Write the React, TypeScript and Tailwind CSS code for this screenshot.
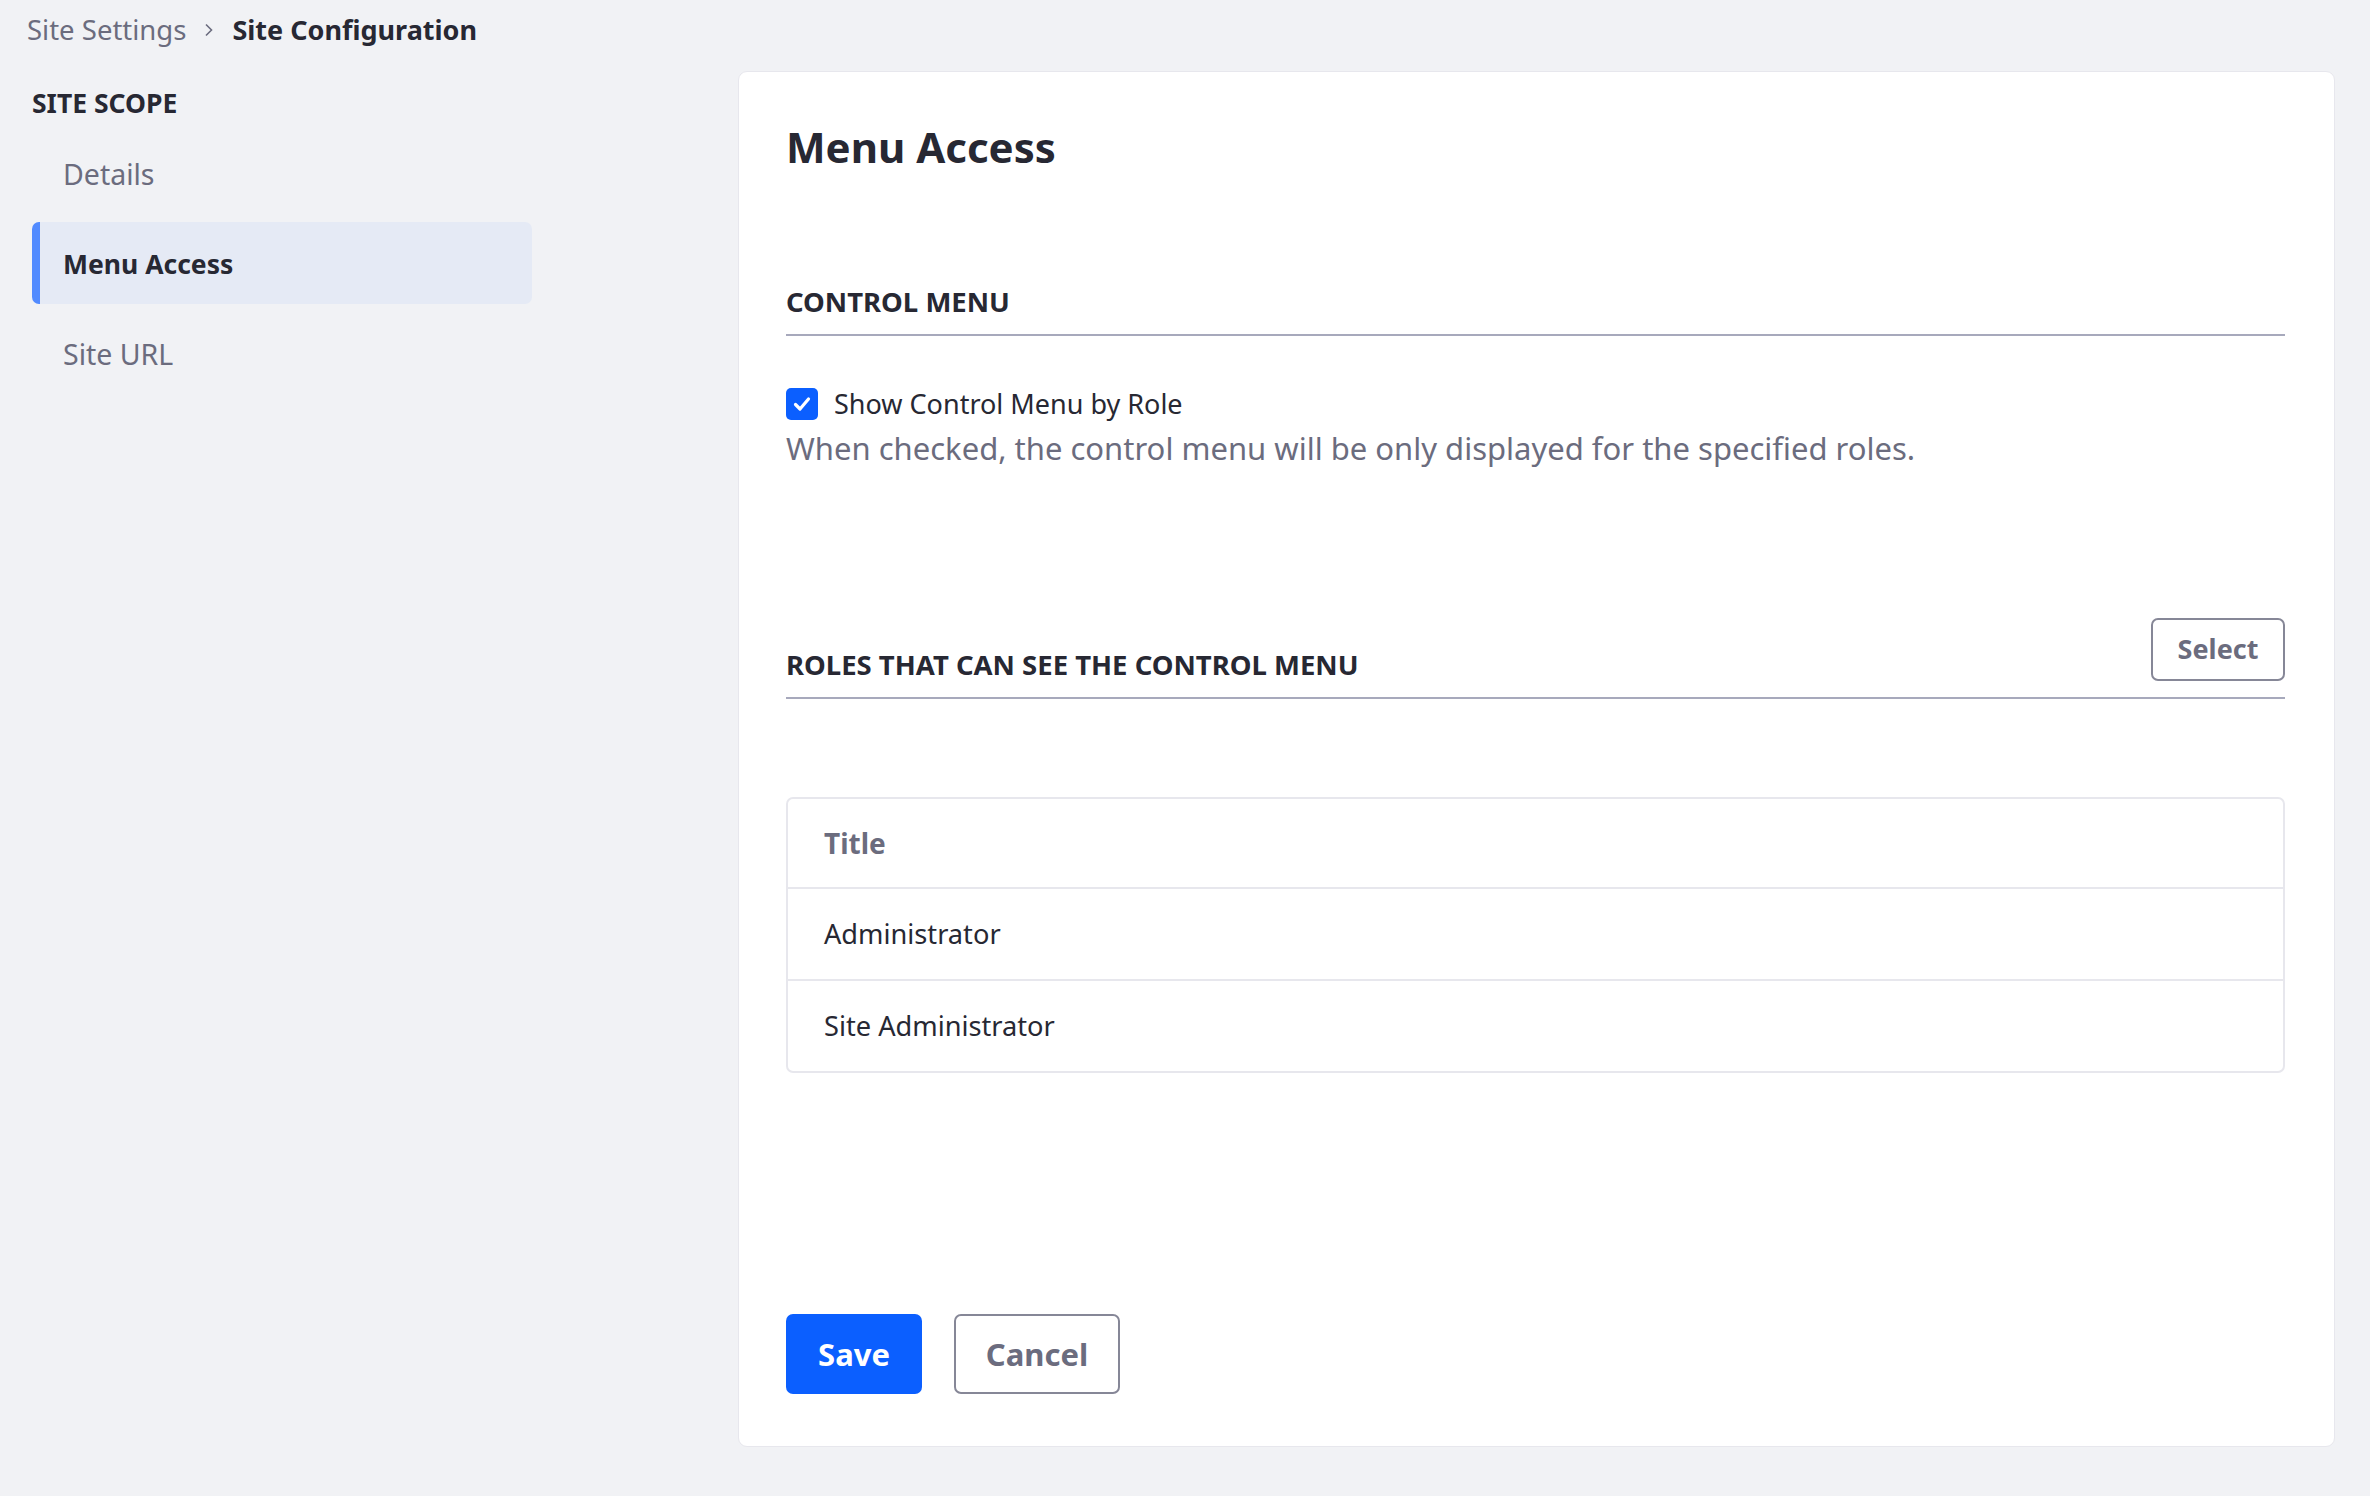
const font = { fontFamily: '"Noto Sans", "Open Sans", sans-serif' };

function NavItem({ label, active }: { label: string; active?: boolean }) {
  if (active) {
    return (
      <div className="h-[82px] flex items-center rounded-[7px] bg-[#e5eaf5] border-l-[8px] border-[#528bff] pl-[23px] pt-[3px] text-[26.5px] font-bold text-[#272833]">
        {label}
      </div>
    );
  }
  return <div className="h-[82px] flex items-center pl-[31px] pt-[2px] text-[28.5px] text-[#6b6c7e]">{label}</div>;
}

function SectionTitle({ children, action }: { children: React.ReactNode; action?: React.ReactNode }) {
  return (
    <div className="flex items-end justify-between border-b-2 border-[#a7a9bc] pb-[16px]">
      <h3 className="text-[27.5px] leading-[32px] font-bold text-[#272833]">{children}</h3>
      {action}
    </div>
  );
}

export default function App() {
  const roles = ['Administrator', 'Site Administrator'];
  return (
    <div className="min-h-screen bg-[#f1f2f5]" style={font}>
      <div className="h-[60px] flex items-center pl-[27px] gap-[18px] text-[27.5px]">
        <span className="text-[#6b6c7e]">Site Settings</span>
        <svg width="10" height="14" viewBox="0 0 10 14" fill="none" className="text-[#6b6c7e]">
          <path d="M2 1.5 L7.5 7 L2 12.5" stroke="currentColor" strokeWidth="1.6" />
        </svg>
        <span className="font-bold text-[27px] text-[#272833]">Site Configuration</span>
      </div>

      <div className="flex pl-[32px] pr-[35px]">
        <aside className="w-[500px] shrink-0 pt-[27px]">
          <div className="text-[26.5px] leading-[32px] font-bold text-[#272833] mb-[13px]">SITE SCOPE</div>
          <nav className="flex flex-col gap-[8px]">
            <NavItem label="Details" />
            <NavItem label="Menu Access" active />
            <NavItem label="Site URL" />
          </nav>
        </aside>

        <main className="ml-[206px] mt-[11px] flex-1 bg-white border border-[#e7e7ed] rounded-[9px] pl-[47px] pr-[49px] pt-[50px] pb-[52px]">
          <h1 className="text-[42px] leading-[50px] font-bold text-[#272833]">Menu Access</h1>

          <div className="mt-[114px]">
            <SectionTitle>CONTROL MENU</SectionTitle>
          </div>

          <div className="mt-[52px] flex items-center gap-[16px]">
            <span className="w-[32px] h-[32px] rounded-[5px] bg-[#0b5fff] flex items-center justify-center">
              <svg width="22" height="22" viewBox="0 0 22 22" fill="none">
                <path d="M4.5 11.5 L9 16 L17.5 6" stroke="white" strokeWidth="3.2" strokeLinecap="round" strokeLinejoin="round" />
              </svg>
            </span>
            <span className="text-[27px] leading-[32px] text-[#272833]">Show Control Menu by Role</span>
          </div>
          <p className="mt-[8px] text-[31px] leading-[40px] text-[#6b6c7e]">
            When checked, the control menu will be only displayed for the specified roles.
          </p>

          <div className="mt-[150px]">
            <SectionTitle
              action={
                <button className="h-[63px] w-[134px] rounded-[7px] border-2 border-[#868797] bg-white text-[27px] font-bold text-[#6b6c7e]">
                  Select
                </button>
              }
            >
              ROLES THAT CAN SEE THE CONTROL MENU
            </SectionTitle>
          </div>

          <div className="mt-[98px] border-2 border-[#e7e7ed] rounded-[7px]">
            <div className="h-[88px] flex items-center pl-[36px] text-[28px] font-bold text-[#6b6c7e]">Title</div>
            {roles.map((r) => (
              <div key={r} className="h-[92px] flex items-center pl-[36px] border-t-2 border-[#e7e7ed] text-[27.2px] text-[#272833]">
                {r}
              </div>
            ))}
          </div>

          <div className="mt-[241px] flex gap-[32px]">
            <button className="h-[80px] w-[136px] rounded-[7px] bg-[#0b5fff] text-white text-[31px] font-bold">Save</button>
            <button className="h-[80px] w-[166px] rounded-[7px] border-2 border-[#868797] bg-white text-[#6b6c7e] text-[31px] font-bold">
              Cancel
            </button>
          </div>
        </main>
      </div>
    </div>
  );
}
